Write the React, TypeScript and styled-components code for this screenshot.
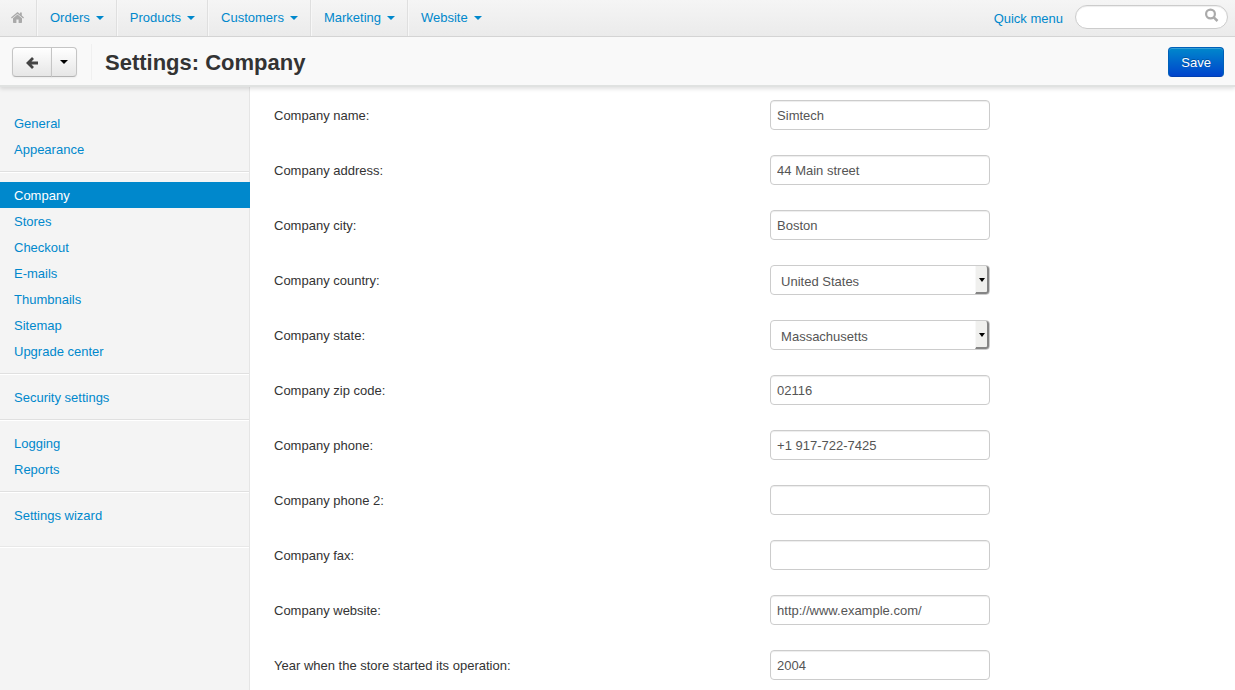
import React from "react";
import styled, { createGlobalStyle, css } from "styled-components";

const GlobalStyle = createGlobalStyle`
  *, *::before, *::after { box-sizing: border-box; }
  body {
    margin: 0;
    background: #fff;
    color: #333;
    font: 13px/20px "Liberation Sans", Arial, sans-serif;
  }
  a { color: #0088cc; text-decoration: none; }
  button, input, select { font: inherit; }
`;

const Page = styled.div`
  display: flex;
  flex-direction: column;
  min-height: 100vh;
`;

const NavBar = styled.nav`
  display: flex;
  align-items: stretch;
  height: 37px;
  padding-right: 7px;
  border-bottom: 1px solid #d4d4d4;
  background: linear-gradient(#f5f5f5, #ebebeb);
`;

const HomeLink = styled.a`
  display: flex;
  align-items: center;
  width: 36px;
  padding: 0 0 2px 11px;
  color: #aaa;
`;

const NavLink = styled.a`
  display: flex;
  align-items: center;
  gap: 6px;
  padding: 0 12px 0 13px;
  border-left: 1px solid #dfdfdf;
  box-shadow: inset 1px 0 #f7f7f7;
`;

const Caret = styled.span`
  border: 4px solid transparent;
  border-top-color: currentColor;
  border-bottom: 0;
`;

const NavTools = styled.div`
  display: flex;
  align-items: center;
  gap: 12px;
  margin-left: auto;
`;

const QuickMenu = styled.a`
  padding-top: 2px;
`;

const SearchBox = styled.form`
  display: flex;
  align-items: center;
  width: 153px;
  height: 24px;
  margin-bottom: 3px;
  padding: 0 8px 0 12px;
  border: 1px solid #ccc;
  border-radius: 12px;
  background: #fff;
  box-shadow: inset 0 1px 1px #eee;
`;

const SearchInput = styled.input`
  flex: 1;
  min-width: 0;
  padding: 0;
  border: 0;
  outline: 0;
  background: transparent;
`;

const SearchButton = styled.button`
  display: flex;
  padding: 0 0 4px;
  border: 0;
  background: none;
  color: #aaa;
`;

const Header = styled.header`
  position: relative;
  display: flex;
  align-items: center;
  height: 48px;
  padding: 2px 11px 0 12px;
  background: #f9f9f9;
  box-shadow: 0 2px 0 #e0e2e1, 0 4px 4px rgba(0, 0, 0, 0.12);
`;

const ButtonGroup = styled.div`
  display: flex;
`;

const GroupButton = styled.button<{ $side: "left" | "right" }>`
  display: flex;
  align-items: center;
  justify-content: center;
  height: 30px;
  padding: 0;
  border: 1px solid #c5c5c5;
  border-bottom-color: #b3b3b3;
  background: linear-gradient(#fff, #e6e6e6);
  box-shadow: 0 1px 2px rgba(0, 0, 0, 0.05);
  ${(p) =>
    p.$side === "left"
      ? css`
          width: 40px;
          padding-top: 2px;
          border-radius: 4px 0 0 4px;
          color: #444;
        `
      : css`
          width: 26px;
          margin-left: -1px;
          border-radius: 0 4px 4px 0;
          color: #000;
        `}
`;

const Title = styled.h1`
  display: flex;
  align-items: center;
  height: 36px;
  margin: 0 0 0 14px;
  padding: 2px 0 0 13px;
  border-left: 1px solid #f0f0f0;
  font-size: 22px;
  line-height: 30px;
`;

const SaveButton = styled.button`
  height: 30px;
  margin-left: auto;
  padding: 1px 12px 0;
  border: 1px solid #0060b8;
  border-bottom-color: #003fb0;
  border-radius: 4px;
  background: linear-gradient(#0088cc, #0044cc);
  box-shadow: inset 0 1px 0 rgba(255, 255, 255, 0.2);
  color: #fff;
  text-shadow: 0 -1px 0 rgba(0, 0, 0, 0.25);
`;

const Body = styled.div`
  display: flex;
  flex: 1;
`;

const Sidebar = styled.aside`
  flex: 0 0 250px;
  padding-top: 16px;
  border-right: 1px solid #e5e5e5;
  background: #f4f4f4;
`;

const MenuGroup = styled.ul`
  margin: 0;
  padding: 9px 0;
  border-bottom: 1px solid #e0e0e0;
  box-shadow: 0 1px #fff;
  list-style: none;

  & + & {
    margin-top: 1px;
  }

  &:last-child {
    padding-bottom: 18px;
    border-bottom-color: #e8e8e8;
  }
`;

const MenuLink = styled.a<{ $active?: boolean }>`
  display: block;
  padding: 4px 14px 2px;
  ${(p) =>
    p.$active &&
    css`
      margin-right: -1px;
      background: #0088cc;
      color: #fff;
    `}
`;

const SettingsForm = styled.form`
  display: flex;
  flex: 1;
  flex-direction: column;
  gap: 25px;
  min-width: 0;
  padding: 15px 25px 10px 24px;
`;

const Row = styled.div`
  display: grid;
  grid-template-columns: 53% 220px;
  align-items: center;
`;

const Label = styled.label`
  padding-top: 2px;
`;

const controlStyle = css`
  width: 100%;
  height: 30px;
  border: 1px solid #ccc;
  border-radius: 4px;
  background: #fff;
  color: #555;
`;

const TextInput = styled.input`
  ${controlStyle}
  padding: 4px 6px;
  box-shadow: inset 0 1px 1px rgba(0, 0, 0, 0.075);
`;

const SelectFrame = styled.div`
  position: relative;
`;

const Select = styled.select`
  ${controlStyle}
  padding: 6px 20px 4px 10px;
  appearance: none;
`;

const SelectArrow = styled.span`
  position: absolute;
  top: 1px;
  right: 1px;
  bottom: 1px;
  display: flex;
  align-items: center;
  justify-content: center;
  width: 14px;
  padding-top: 2px;
  border: solid #858585;
  border-width: 0 2px 2px 0;
  border-left: 1px solid #f8f8f8;
  border-radius: 0 3px 3px 0;
  background: #f0f0ee;
  color: #000;
  pointer-events: none;
`;

const SmallCaret = styled(Caret)`
  border-width: 4px 3px 0;
`;

const navItems = ["Orders", "Products", "Customers", "Marketing", "Website"];

const menu = [
  ["General", "Appearance"],
  ["Company", "Stores", "Checkout", "E-mails", "Thumbnails", "Sitemap", "Upgrade center"],
  ["Security settings"],
  ["Logging", "Reports"],
  ["Settings wizard"],
];

const fields = [
  { id: "name", label: "Company name:", value: "Simtech" },
  { id: "address", label: "Company address:", value: "44 Main street" },
  { id: "city", label: "Company city:", value: "Boston" },
  { id: "country", label: "Company country:", value: "United States", select: true },
  { id: "state", label: "Company state:", value: "Massachusetts", select: true },
  { id: "zip", label: "Company zip code:", value: "02116" },
  { id: "phone", label: "Company phone:", value: "+1 917-722-7425" },
  { id: "phone2", label: "Company phone 2:", value: "" },
  { id: "fax", label: "Company fax:", value: "" },
  { id: "website", label: "Company website:", value: "http://www.example.com/" },
  { id: "year", label: "Year when the store started its operation:", value: "2004" },
];

const HomeIcon = () => (
  <svg width="13" height="11" viewBox="0 0 13 11" fill="currentColor" aria-hidden="true">
    <path d="M6.5 2.6 11 6.3v4a.7.7 0 0 1-.7.7H7.6V7.6H5.4V11H2.7a.7.7 0 0 1-.7-.7v-4z" />
    <path d="M6.5 0 9 2.1V.6h1.8v3L13 5.5l-.8 1-5.7-4.8L.8 6.5 0 5.5z" />
  </svg>
);

const BackIcon = () => (
  <svg width="12" height="12" viewBox="0 0 12 12" fill="none" stroke="currentColor" strokeWidth="2.8" aria-hidden="true">
    <path d="M7 1 2 6l5 5M2 6h10" />
  </svg>
);

const SearchIcon = () => (
  <svg width="14" height="14" viewBox="0 0 14 14" fill="none" stroke="currentColor" strokeWidth="2.2" aria-hidden="true">
    <circle cx="5.5" cy="6" r="4.4" />
    <path d="m8.800 9.300 3.700 3.700" strokeWidth="2.500" />
  </svg>
);

export default function App() {
  return (
    <Page>
      <GlobalStyle />
      <NavBar>
        <HomeLink href="#" aria-label="Home">
          <HomeIcon />
        </HomeLink>
        {navItems.map((item) => (
          <NavLink href="#" key={item}>
            {item}
            <Caret />
          </NavLink>
        ))}
        <NavTools>
          <QuickMenu href="#">Quick menu</QuickMenu>
          <SearchBox>
            <SearchInput type="text" aria-label="Search" />
            <SearchButton type="button" aria-label="Search">
              <SearchIcon />
            </SearchButton>
          </SearchBox>
        </NavTools>
      </NavBar>
      <Header>
        <ButtonGroup>
          <GroupButton $side="left" type="button" aria-label="Back">
            <BackIcon />
          </GroupButton>
          <GroupButton $side="right" type="button" aria-label="Recent pages">
            <Caret />
          </GroupButton>
        </ButtonGroup>
        <Title>Settings: Company</Title>
        <SaveButton type="submit" form="settings">
          Save
        </SaveButton>
      </Header>
      <Body>
        <Sidebar>
          {menu.map((group) => (
            <MenuGroup key={group[0]}>
              {group.map((item) => (
                <li key={item}>
                  <MenuLink href="#" $active={item === "Company"}>
                    {item}
                  </MenuLink>
                </li>
              ))}
            </MenuGroup>
          ))}
        </Sidebar>
        <SettingsForm id="settings">
          {fields.map((field) => (
            <Row key={field.id}>
              <Label htmlFor={field.id}>{field.label}</Label>
              {field.select ? (
                <SelectFrame>
                  <Select id={field.id} defaultValue={field.value}>
                    <option>{field.value}</option>
                  </Select>
                  <SelectArrow>
                    <SmallCaret />
                  </SelectArrow>
                </SelectFrame>
              ) : (
                <TextInput id={field.id} type="text" defaultValue={field.value} />
              )}
            </Row>
          ))}
        </SettingsForm>
      </Body>
    </Page>
  );
}
